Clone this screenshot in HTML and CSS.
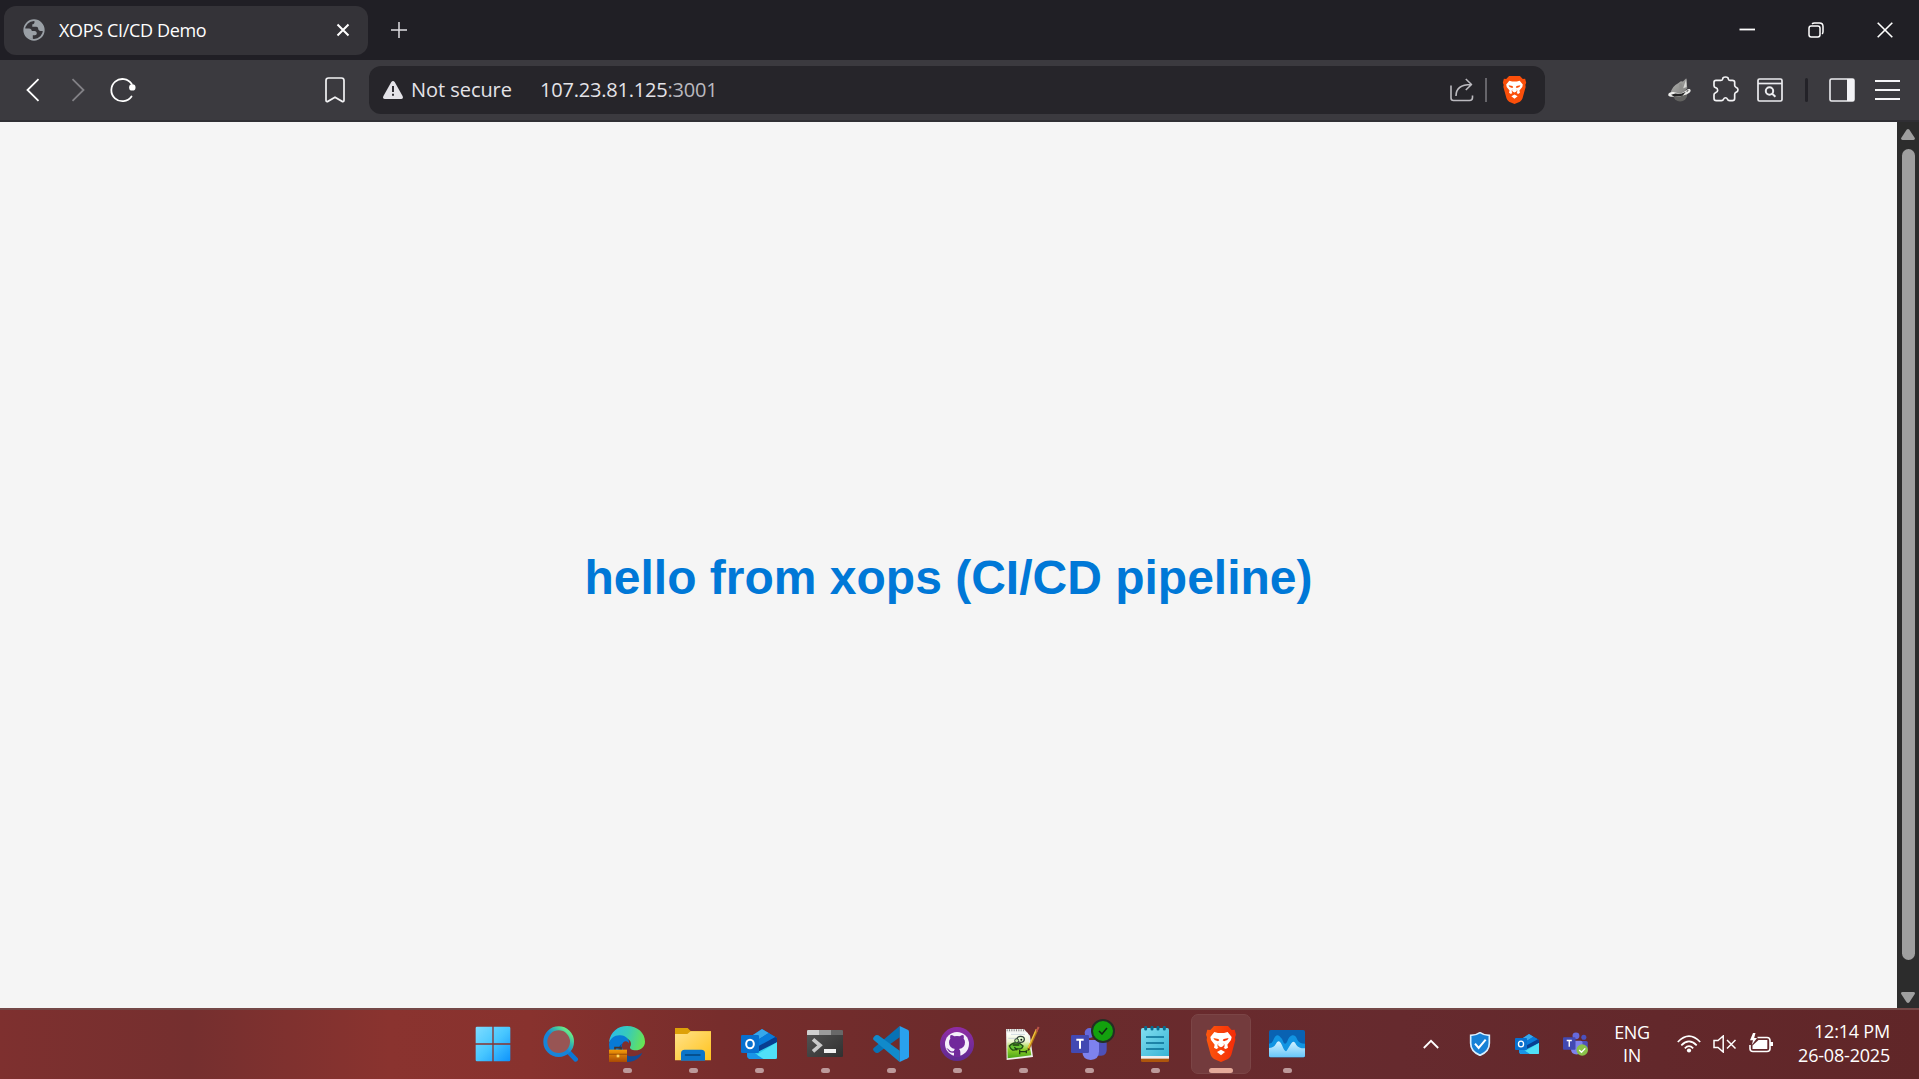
FILE: index.html
```html
<!DOCTYPE html>
<html lang="en">
<head>
<meta charset="utf-8">
<title>XOPS CI/CD Demo</title>
<link rel="stylesheet" href="styles.css">
</head>
<body>
<header class="tabstrip">
  <div class="tab">
    <svg class="globe" viewBox="0 0 22 22"><circle cx="11" cy="11" r="9.800" fill="#343338" stroke="#9aa0a6" stroke-width="1.700"/><path d="M1.500 9.500h4.500c1.800 0 2.600 1 2.800 2.400h2.700c1.500 0 2.300 1 2.300 2.300 0 1.200-.8 2-2 2H9.800v3.800C4.500 19.800 1 15 1.500 9.500z" fill="#9aa0a6"/><path d="M11.500 1.500v1.700c0 1.300-1 2-2.200 2.100v2.500h3.900c1.300 0 1.900.8 2 2 .1 1.400 1 2.100 2.400 2.100h3.200C21 6 17 1.500 11.500 1.500z" fill="#9aa0a6"/></svg>
    <span class="tab-title">XOPS CI/CD Demo</span>
    <svg class="tab-close" viewBox="0 0 14 14"><path d="M1.500 1.500l11 11m0-11l-11 11" stroke="#fff" stroke-width="2"/></svg>
  </div>
  <svg class="newtab" viewBox="0 0 16 16"><path d="M8 0v16M0 8h16" stroke="#dedee2" stroke-width="1.500"/></svg>
  <div class="window-controls">
    <svg viewBox="0 0 16 16"><path d="M.5 7.500H16" stroke="#fff" stroke-width="1.800"/></svg>
    <svg viewBox="0 0 16 16" fill="none" stroke="#fff" stroke-width="1.500"><rect x="1" y="4" width="11" height="11" rx="2.200"/><path d="M4 1.800Q5 1 6.500 1h5Q15 1 15 4.500v5Q15 11 14.200 12"/></svg>
    <svg viewBox="0 0 16 16"><path d="M.7.700l14.600 14.600m0-14.600L.7 15.300" stroke="#fff" stroke-width="1.600"/></svg>
  </div>
</header>

<nav class="toolbar">
  <div class="nav-buttons">
    <svg class="arrow" viewBox="0 0 14 24"><path d="M12.500 1.200L1.500 12l11 10.800" fill="none" stroke="#fff" stroke-width="1.800"/></svg>
    <svg class="arrow" viewBox="0 0 14 24"><path d="M1.500 1.200L12.500 12l-11 10.800" fill="none" stroke="#828186" stroke-width="1.800"/></svg>
    <svg class="reload" viewBox="0 0 26 26"><path d="M21.500 19.500A11.100 11.100 0 1 1 21.700 7" fill="none" stroke="#fff" stroke-width="1.800" stroke-linecap="round"/><circle cx="22.300" cy="10.400" r="3.200" fill="#fff"/></svg>
  </div>
  <svg class="bookmark" viewBox="0 0 20 26"><path d="M3.500 1h13Q19 1 19 3.500v19.800q0 1.700-1.500 1.300L10 20.200l-7.500 4.400Q1 25 1 23.300V3.500Q1 1 3.500 1z" fill="none" stroke="#f2f2f4" stroke-width="1.700"/></svg>
  <div class="addressbar">
    <svg class="warning" viewBox="0 0 20 18"><path d="M8.300 1Q10-.8 11.700 1l8 14.200Q20.500 18 18 18H2Q-.5 18 .3 15.200z" fill="#e4e3e8"/><path d="M10 5v6m0 1.800v2" stroke="#26252a" stroke-width="1.900"/></svg>
    <span class="security">Not secure</span>
    <span class="url">107.23.81.125<span class="port">:3001</span></span>
    <svg class="share" viewBox="0 0 24 24" fill="none" stroke="#bbbabf" stroke-width="1.600" stroke-linejoin="round"><path d="M1 7.500V20q0 2.500 2.500 2.500h16q3 0 3-3V17.500"/><path d="M6 18C6 10 11 6.500 21 6.500M15.800 1l5.700 5.500-5.700 5.500"/></svg>
    <span class="addr-divider"></span>
    <svg class="shield-lion" viewBox="0 0 90 108"><use href="#lion" fill="#fb4f0a"/></svg>
  </div>
  <div class="extensions">
    <svg class="ext-fox" viewBox="0 0 68 70"><defs><linearGradient id="fox" x1="0" y1="0" x2="1" y2="1"><stop offset="0" stop-color="#b4b4b2"/><stop offset="1" stop-color="#7d7d7b"/></linearGradient></defs><circle cx="36" cy="48" r="21" fill="#626260"/><path d="M8 43Q12 24 30 15l8-6 6 1L54 0l3 30-15 14-30 4z" fill="url(#fox)"/><path d="M54 2l-9 28 10-4z" fill="#d8d8d6"/><path d="M33 17l2 20 8-8-3-15z" fill="#8e8e8c"/><path d="M1 51c-2-8 8-11 15-10l21 5 14-8c9-8 16-7 16-1-1 8-19 15-38 17-13 1-26 2-28-3z" fill="#efefed"/><path d="M9 49l13-4 15 2 16-7-10 12-24 3z" fill="#242424"/><path d="M54 37l8-3-6 8z" fill="#444"/></svg>
    <svg class="ext-puzzle" viewBox="0 0 78 78"><path d="M9 13h15c4 0 5-2 5-4 0-8 17-8 17 0 0 2 1 4 5 4h7c5 0 7 2 7 6v9c0 4 2 5 4 6 8 2 8 13 0 15-2 1-4 2-4 6v12c0 5-2 7-7 7h-8c-4 0-6-2-7-5-2-5-9-5-11 0-1 3-3 5-7 5H10c-5 0-7-2-7-7V56c0-3 2-5 5-6 8-2 8-13 0-15-3-1-5-3-5-6V19c0-4 2-6 6-6z" fill="none" stroke="#f3f3f5" stroke-width="5"/></svg>
    <svg class="ext-search" viewBox="0 0 26 24" fill="none" stroke="#ececef" stroke-width="1.700"><rect x="1" y="1" width="24" height="22" rx="1.500"/><path d="M1 5.500h24"/><circle cx="12.500" cy="13" r="3.700" stroke-width="2"/><path d="M15.200 15.700l3.200 3" stroke-width="2"/></svg>
    <span class="ext-divider"></span>
    <svg class="ext-side" viewBox="0 0 26 24"><rect x="1" y="1" width="24" height="22" rx="1.500" fill="none" stroke="#ececef" stroke-width="1.600"/><path d="M18 1h7v22h-7z" fill="#f3f3f6"/></svg>
    <svg class="ext-menu" viewBox="0 0 25 20"><path d="M0 1h25M0 10h25M0 19h25" stroke="#f5f5f7" stroke-width="1.800"/></svg>
  </div>
</nav>

<main class="viewport">
  <section class="page"><h1 class="greeting">hello from xops (CI/CD pipeline)</h1></section>
  <aside class="scrollbar">
    <svg class="sb-arrow" viewBox="0 0 14 11"><path d="M5.600.800Q7-.8 8.400.800L13.800 9q.6 2-1.300 2h-11Q-.4 11 .2 9z" fill="#9f9f9f"/></svg>
    <div class="thumb"></div>
    <svg class="sb-arrow" viewBox="0 0 14 11"><path d="M5.600 10.200Q7 11.800 8.400 10.200L13.800 2Q14.400 0 12.500 0h-11Q-.4 0 .2 2z" fill="#9f9f9f"/></svg>
  </aside>
</main>

<footer class="taskbar">
  <div class="apps">
    <div class="app start"><svg viewBox="0 0 108 108"><defs><linearGradient id="win" x1="0" y1="0" x2="1" y2="1" ><stop offset="0" stop-color="#80ddff"/><stop offset=".5" stop-color="#48c7ff"/><stop offset="1" stop-color="#0b91fb"/></linearGradient><mask id="panes"><path d="M6 2h46v50H2V6q0-4 4-4zM56 2h46q4 0 4 4v46H56zM2 56h50v50H6q-4 0-4-4zM56 56h50v46q0 4-4 4H56z" fill="#fff"/></mask></defs><rect width="108" height="108" fill="url(#win)" mask="url(#panes)"/></svg></div>
    <div class="app"><svg viewBox="2 0 108 108"><defs><linearGradient id="ring" x1=".8" y1=".1" x2=".25" y2=".7"><stop offset="0" stop-color="#63e58c"/><stop offset=".3" stop-color="#35b8ac"/><stop offset=".65" stop-color="#1784d8"/></linearGradient></defs><path d="M77 76l23 24" stroke="#0c76d5" stroke-width="14" stroke-linecap="round"/><circle cx="49" cy="47" r="40" fill="#985554" stroke="url(#ring)" stroke-width="12"/></svg></div>
    <div class="app"><svg viewBox="0 0 108 108"><defs><linearGradient id="edge1" x1="0" y1=".3" x2="1" y2=".5"><stop offset="0" stop-color="#2abcea"/><stop offset=".5" stop-color="#38cbb8"/><stop offset="1" stop-color="#68e454"/></linearGradient><linearGradient id="bag" x2="0" y2="1"><stop stop-color="#f39b09"/><stop offset="1" stop-color="#a94b04"/></linearGradient></defs><path d="M0 49C4 17 27 0 54 0c32 0 54 21 54 47 0 16-13 26-28 26-12 0-18-5-17-10 6-9 3-20-8-25C35 28 12 33 0 49z" fill="url(#edge1)"/><path d="M0 55C3 35 18 27 34 28c17 1 28 12 26 25-1-6-11-10-17-4-9 10-3 27 10 36v23C22 108 0 86 0 55z" fill="#087ad5"/><path d="M39 53c-7 18 8 38 29 38 14 0 23-6 32-11-8 18-27 29-50 28C24 91 22 64 39 53z" fill="#124b96"/><path d="M18 71v-6h18v6" fill="none" stroke="#463229" stroke-width="5"/><path d="M0 71h54v37H0z" fill="url(#bag)"/><path d="M0 85h54" stroke="#a85806" stroke-width="4"/><path d="M23 86h8v8h-8z" fill="#ffd960"/></svg><i></i></div>
    <div class="app"><svg viewBox="0 0 108 108"><defs><linearGradient id="fold" x2="1" y2="1"><stop stop-color="#ffe28a"/><stop offset="1" stop-color="#ffc31c"/></linearGradient></defs><path d="M0 6h38l9 9h61v30H0z" fill="#dda108"/><path d="M0 24h37l10-8h61v87H0z" fill="url(#fold)"/><path d="M18 104V82q0-11 11-11h50q11 0 11 11v22z" fill="#0b75c9"/><path d="M32 87h42" stroke="#05508f" stroke-width="6" stroke-linecap="round"/></svg><i></i></div>
    <div class="app"><svg viewBox="0 0 108 108"><g id="outlook"><path d="M18 38L63 9l45 27v60q0 3-4 3H30q-12 0-12-12z" fill="#0d67c3"/><path d="M28 32L63 9l20 12-45 28z" fill="#36a8ec"/><path d="M41 48l42-27 20 12-49 31z" fill="#087bda"/><path d="M53 60l50-27 5 4v20L54 82z" fill="#083e91"/><path d="M108 49v44q0 6-6 6H31q-9 0-11-6z" fill="#30ceed"/><path d="M18 66l50 33H30q-12 0-12-12z" fill="#1995e7"/><path d="M108 49L48 86l20 13h34q6 0 6-6z" fill="#50e0f8"/><rect y="27" width="54" height="54" rx="4" fill="#0870cf"/><ellipse cx="27" cy="54" rx="11.500" ry="13" fill="none" stroke="#fff" stroke-width="6"/></g></svg><i></i></div>
    <div class="app"><svg viewBox="0 0 108 108"><defs><linearGradient id="term" x2="1" y2="1"><stop stop-color="#555"/><stop offset="1" stop-color="#303030"/></linearGradient></defs><rect y="12" width="108" height="81" rx="4" fill="url(#term)"/><path d="M4 12h32v15H0V16q0-4 4-4z" fill="#d0d0d0"/><path d="M36 12h36v15H36z" fill="#9c9c9c"/><path d="M72 12h32q4 0 4 4v11H72z" fill="#686868"/><path d="M18 40l21 18-21 18" fill="none" stroke="#c9c9c9" stroke-width="11"/><rect x="51" y="69" width="36" height="12" fill="#f2f2f2"/></svg><i></i></div>
    <div class="app"><svg viewBox="0 0 108 108"><path d="M80 0v34L16 80q-6 3-10-1l-4-5q-4-5 1-9z" fill="#0872b5"/><path d="M80 108V74L16 28q-6-3-10 1l-4 5q-4 5 1 9z" fill="#118acb"/><path d="M80 0l24 11q4 2 4 6v74q0 4-4 6l-24 11z" fill="#29a1ee"/></svg><i></i></div>
    <div class="app"><svg viewBox="0 0 108 108"><defs><linearGradient id="git" x2="0" y2="1"><stop stop-color="#902ca5"/><stop offset="1" stop-color="#5f2b91"/></linearGradient></defs><circle cx="54" cy="54" r="51" fill="url(#git)"/><circle cx="54" cy="54" r="36" fill="#f4effa"/><path d="M45 93V80q-14 2-18-8l-5-5q4-1 9 5 5 7 14 3 0-4 3-6-18-3-18-20 0-7 4-11-2-5 1-11 5 0 11 4 8-2 16 0 6-4 11-4 3 6 1 11 4 4 4 11 0 17-18 20 4 3 4 9v15z" fill="#71299b"/></svg><i></i></div>
    <div class="app"><svg viewBox="0 0 108 108"><defs><linearGradient id="npp" x2="0" y2="1"><stop stop-color="#fff"/><stop offset=".35" stop-color="#eef4d0"/><stop offset=".65" stop-color="#8fd12c"/><stop offset="1" stop-color="#48a316"/></linearGradient></defs><path d="M3 9h54l18 20 9 64-79 9z" fill="#f0f0ed"/><path d="M6 20h62l11 68-71 9z" fill="url(#npp)"/><path d="M5 13h54" stroke="#888" stroke-width="6" stroke-dasharray="3 4"/><path d="M18 25h42M10 37h25" stroke="#b5c3d0" stroke-width="2"/><path d="M13 60q13-15 32-7l9 7q-3 12-18 8-15 12-23-8z" fill="#65c231" stroke="#245415" stroke-width="4"/><ellipse cx="47" cy="40" rx="11" ry="9" fill="#e6ffd0" stroke="#34423a" stroke-width="4"/><circle cx="35" cy="44" r="6" fill="#b9e496" stroke="#34423a" stroke-width="3"/><circle cx="49" cy="41" r="3" fill="#111"/><path d="M23 57h20M28 64l9 9M44 77h20m-20-5v13m20-12v9" stroke="#203d12" stroke-width="4"/><path d="M96 12L70 70" stroke="#b27516" stroke-width="7"/><path d="M94 10L70 65" stroke="#f3c43d" stroke-width="4"/><path d="M101 3l-7 14" stroke="#bc5548" stroke-width="6"/><path d="M69 67l-2 9 8-5z" fill="#43301b"/></svg><i></i></div>
    <div class="app teams"><svg viewBox="0 0 108 108"><g id="teams"><circle cx="56" cy="21" r="15" fill="#6669dc"/><circle cx="90" cy="27" r="11" fill="#4b51bd"/><path d="M68 43h32q7 0 7 7v22q0 16-16 17H70z" fill="#4e51b9"/><path d="M34 42h43q7 0 7 7v27q0 25-25 26-25-1-25-26z" fill="#7e82ee"/><rect y="27" width="54" height="54" rx="4" fill="#4249b2"/><path d="M16 41h22M27 40v28" stroke="#fff" stroke-width="6"/></g></svg><span class="badge"><svg viewBox="0 0 10 8"><path d="M1 4l3 3 5-6" fill="none" stroke="#122a12" stroke-width="1.500"/></svg></span><i></i></div>
    <div class="app"><svg viewBox="0 0 108 108"><defs><linearGradient id="note" x2="1" y2="1"><stop stop-color="#81def0"/><stop offset="1" stop-color="#38b4d5"/></linearGradient></defs><rect x="12" y="84" width="84" height="24" rx="4" fill="#ae560c"/><path d="M12 83h84v15H12z" fill="#eee"/><path d="M12 11q0-5 5-5h74q5 0 5 5v79H12z" fill="url(#note)"/><path d="M27 33h54M27 51h54M27 69h54" stroke="#086d94" stroke-width="5"/><path d="M26 4v5m19-5v5m18-5v5m19-5v5" stroke="#086b8e" stroke-width="9" stroke-linecap="round"/></svg><i></i></div>
    <div class="app active"><svg viewBox="-9 0 108 108"><defs><linearGradient id="brave"><stop stop-color="#fc580d"/><stop offset="1" stop-color="#f52b08"/></linearGradient><g id="lion"><path d="M24 0h42l11 12 9-1 4 15-3 8 1 8-12 44q-3 9-10 13L45 108 24 99q-7-4-10-13L2 42l1-8-3-8 4-15 9 1z"/><path d="M25 18l11 3h18l11-3 12 15-2 9-11 14 2 9-7 4-7-4-2-7 3-5H37l3 5-2 7-7 4-7-4 2-9-11-14-2-9z" fill="#fff"/><path d="M38 42h14l-2 10 6 9-11 6-11-6 6-9z" fill="#fff"/><path d="M45 71l12 7-12 10-12-10z" fill="#fff"/><path d="M22 36l15 3 3 4-4 3-10-4zM68 36l-15 3-3 4 4 3 10-4z"/><path d="M34 54l5 7 6 3 6-3 5-7-1 10-10 6-10-6z"/></g></defs><use href="#lion" fill="url(#brave)"/></svg><i></i></div>
    <div class="app"><svg viewBox="0 0 108 108"><defs><linearGradient id="wave" x2="0" y2="1"><stop stop-color="#d4f1ff"/><stop offset="1" stop-color="#66c6fa"/></linearGradient></defs><rect y="12" width="108" height="82" rx="5" fill="#0962b2"/><path d="M0 53q8 0 12-9 9-22 19-14 8 6 13 20 5 7 10-2 6-18 16-20 10-1 15 13 6 12 23 12v37H0z" fill="#1194e2"/><path d="M0 66q14 0 20-11 9-20 19 3 10 25 15 15l12-20q9-13 16 4 8 11 26 10v22q0 5-5 5H5q-5 0-5-5z" fill="url(#wave)"/></svg><i></i></div>
  </div>
  <div class="tray">
    <svg class="chevron" viewBox="0 0 16 10"><path d="M.8 9L8 1.800 15.200 9" fill="none" stroke="#fff" stroke-width="1.800"/></svg>
    <svg class="defender" viewBox="0 0 64 72"><path d="M32 2q12 8 28 8v24q0 25-28 36Q4 59 4 34V10q16 0 28-8z" fill="#1781d6" stroke="#d9efff" stroke-width="5"/><path d="M17 35l11 13 21-25" fill="none" stroke="#fff" stroke-width="6"/></svg>
    <svg class="tray-outlook" viewBox="0 0 108 108"><use href="#outlook"/></svg>
    <svg class="tray-teams" viewBox="0 0 108 108"><use href="#teams"/><circle cx="83" cy="82" r="25" fill="#8ac249"/><path d="M70 82l10 10 16-17" fill="none" stroke="#fff" stroke-width="6"/></svg>
    <div class="language"><span>ENG</span><span>IN</span></div>
    <svg class="wifi" viewBox="0 0 24 18" fill="none" stroke="#fff" stroke-width="1.700"><path d="M.8 7Q12-4.600 23.200 7M4.300 10.300Q12 2.500 19.700 10.300M7.800 13.300Q12 9 16.200 13.300"/><circle cx="12" cy="15.500" r="2.100" fill="#fff" stroke="none"/></svg>
    <svg class="sound" viewBox="0 0 24 18" fill="none" stroke="#fff" stroke-width="1.500"><path d="M1 5.500h4L10.200 1v16L5 12.500H1zM14 5l8.500 8.500m0-8.500L14 13.500"/></svg>
    <svg class="battery" viewBox="0 0 24 20"><path d="M8.500 4.500H18q3 0 3 3v8q0 3-3 3H4q-3 0-3-3V12" fill="none" stroke="#fff" stroke-width="1.600"/><path d="M21 9h3v4h-3z" fill="#fff"/><path d="M9.500 7h8.800v9H3.500v-3.500z" fill="#fff"/><path d="M4 0L1 7.200h3L2.800 12 8 5H5.200L6.500 0z" fill="#fff"/></svg>
    <div class="clock"><span class="time">12:14 PM</span><span class="date">26-08-2025</span></div>
  </div>
</footer>
</body>
</html>
```
FILE: styles.css
```css
* { box-sizing: border-box; }
body {
  margin: 0;
  width: 1919px;
  height: 1079px;
  overflow: hidden;
  display: flex;
  flex-direction: column;
  font-family: "Open Sans", "Noto Sans", sans-serif;
  color: #fff;
}
svg { display: block; flex: none; }

.tabstrip { height: 60px; background: #201f25; display: flex; align-items: center; padding-left: 4px; }
.tab {
  width: 364px; height: 49px; border-radius: 12px; background: #343338;
  display: flex; align-items: center; padding: 0 18px 0 19px;
}
.globe { width: 22px; height: 22px; }
.tab-title { font-size: 18px; line-height: 24px; letter-spacing: -0.35px; margin: -1px 0 0 14px; flex: 1; white-space: nowrap; }
.tab-close { width: 14px; height: 14px; }
.newtab { width: 16px; height: 16px; margin-left: 23px; }
.window-controls { margin-left: auto; display: flex; gap: 53px; padding-right: 26px; }
.window-controls svg { width: 16px; height: 16px; }

.toolbar {
  height: 62px; background: #3b3a3f; border-bottom: 2px solid #302f34;
  display: flex; align-items: center; padding-left: 26px;
}
.nav-buttons { display: flex; align-items: center; gap: 31px; width: 299px; }
.arrow { width: 14px; height: 24px; }
.reload { width: 26px; height: 26px; margin-left: -6px; }
.bookmark { width: 20px; height: 26px; }
.addressbar {
  width: 1176px; height: 48px; margin-left: 24px; border-radius: 12px; background: #26252a;
  display: flex; align-items: center; padding: 0 18px 0 14px;
  font-size: 20px; line-height: 26px; color: #e4e3e8; white-space: nowrap;
}
.warning { width: 20px; height: 18px; margin-right: 8px; }
.security { width: 129px; letter-spacing: -0.05px; }
.url { flex: 1; letter-spacing: -0.2px; }
.port { color: #bab9bf; }
.share { width: 24px; height: 24px; }
.addr-divider { width: 2px; height: 24px; margin: 0 15px 0 11px; background: #66656a; }
.shield-lion { width: 25px; height: 28px; }
.extensions { display: flex; align-items: center; margin-left: 123px; }
.ext-fox { width: 23px; height: 24px; }
.ext-puzzle { width: 26px; height: 26px; margin: -3px 0 0 22px; }
.ext-search { width: 26px; height: 24px; margin-left: 18px; }
.ext-divider { width: 3px; height: 24px; margin: 0 21px 0 22px; background: #232228; border-radius: 2px; }
.ext-side { width: 26px; height: 24px; }
.ext-menu { width: 25px; height: 20px; margin-left: 20px; }

.viewport { height: 886px; display: flex; background: #f5f5f5; }
.page { flex: 1; display: flex; align-items: center; justify-content: center; padding-top: 26px; }
.greeting {
  margin: 0; font: bold 48px/54px "Liberation Sans", Arial, sans-serif;
  color: #0078d7; white-space: nowrap;
}
.scrollbar {
  width: 22px; background: #2c2c2c; display: flex; flex-direction: column;
  align-items: center; padding: 7px 0 5px; justify-content: space-between;
}
.sb-arrow { width: 14px; height: 11px; }
.thumb { width: 13px; height: 811px; border-radius: 7px; background: #9f9f9f; margin-bottom: 23px; }

.taskbar {
  height: 71px; display: flex; align-items: flex-start; justify-content: space-between;
  border-top: 2px solid #744847; padding: 4px 29px 0 463px;
  background: linear-gradient(90deg, #7e302f 0, #752f2f 190px, #8a332f 390px, #88322e 530px, #772d2c 720px, #6c2b2c 960px, #662a2e 1400px, #602628 1919px) border-box;
}
.apps { display: flex; gap: 6px; }
.app {
  position: relative; width: 60px; height: 60px; border-radius: 7px;
  display: flex; flex-direction: column; align-items: center; padding-top: 12px;
}
.app > svg { width: 36px; height: 36px; }
.start { margin-right: 2px; }
.app i { width: 9px; height: 5px; border-radius: 3px; background: #bd9a9b; margin-top: 6px; }
.app.active { background: #733b3d; border: 1px solid #7b4546; padding-top: 11px; }
.active i { width: 24px; background: #e5ab9b; }
.badge {
  position: absolute; left: 32px; top: 5px; width: 24px; height: 24px; border-radius: 50%;
  background: #13a10e; border: 2px solid #242f24; display: grid; place-items: center;
}
.badge svg { width: 10px; height: 8px; }

.tray { display: flex; align-items: center; height: 60px; }
.chevron { width: 16px; height: 10px; margin-right: 30px; }
.defender { width: 22px; height: 24px; margin-right: 24px; }
.tray-outlook { width: 24px; height: 24px; margin-right: 24px; }
.tray-teams { width: 25px; height: 25px; margin-top: -1px; }
.language {
  width: 40px; margin: -1px 25px 0 24px; display: flex; flex-direction: column;
  align-items: center; font-size: 18px; line-height: 23px; letter-spacing: -0.4px;
}
.wifi { width: 24px; height: 18px; margin-right: 12px; }
.sound { width: 24px; height: 18px; margin-right: 12px; }
.battery { width: 24px; height: 20px; margin-top: -3px; }
.clock {
  width: 117px; margin-top: -2px; display: flex; flex-direction: column; align-items: flex-end;
  font-size: 18px; line-height: 24px; letter-spacing: -0.2px; white-space: nowrap;
}
```
